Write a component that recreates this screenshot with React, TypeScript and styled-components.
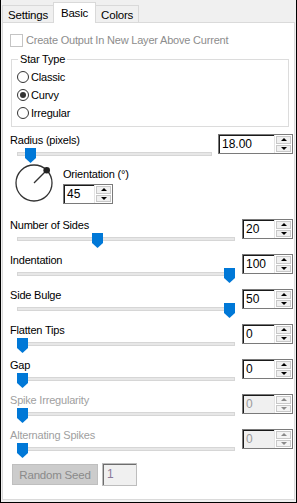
import styled, { createGlobalStyle } from "styled-components";

const GlobalStyle = createGlobalStyle`
  html, body {
    margin: 0;
    padding: 0;
    background: #f0f0f0;
  }
  body {
    font-family: "Liberation Sans", Arial, sans-serif;
    font-size: 11px;
    letter-spacing: -0.2px;
    color: #000;
  }
  * {
    box-sizing: border-box;
  }
`;

const Frame = styled.div`
  width: 297px;
  height: 503px;
  border: 1px solid #000;
  border-top: none;
  background: #f0f0f0;
  display: flex;
  flex-direction: column;
`;

const TabStrip = styled.div`
  height: 22px;
  display: flex;
  align-items: flex-end;
  padding-left: 1px;
`;

const Tab = styled.div<{ $active?: boolean }>`
  height: ${({ $active }) => ($active ? "21px" : "17px")};
  padding: ${({ $active }) => ($active ? "3px 7px 0" : "2px 5px 0")};
  margin: ${({ $active }) => ($active ? "0 -1px -1px" : "0")};
  border: 1px solid #d9d9d9;
  border-bottom: none;
  background: ${({ $active }) => ($active ? "#fff" : "#f0f0f0")};
  position: relative;
  z-index: ${({ $active }) => ($active ? 1 : 0)};
  line-height: 14px;
  font-size: 11.5px;
`;

const Page = styled.div`
  margin: 0 1px;
  height: 478px;
  background: #fff;
  border: 1px solid #dadada;
  padding-left: 7px;
  display: flex;
  flex-direction: column;
`;

const CheckRow = styled.div`
  margin-top: 11px;
  display: flex;
  align-items: center;
  gap: 3px;
  color: #8d8d8d;
  line-height: 13px;
`;

const CheckBox = styled.span`
  width: 13px;
  height: 13px;
  border: 1px solid #c4c4c4;
  background: #fff;
`;

const Group = styled.fieldset`
  margin: 6px 0 0 1px;
  padding: 0;
  width: 278px;
  height: 74px;
  border: 1px solid #dcdcdc;
`;

const Legend = styled.legend`
  margin-left: 6px;
  padding: 0 2px;
  line-height: 13px;
`;

const RadioList = styled.div`
  padding: 2px 0 0 5px;
  display: flex;
  flex-direction: column;
`;

const RadioItem = styled.label`
  height: 18px;
  display: flex;
  align-items: center;
  gap: 2px;
`;

const RadioDot = styled.span<{ $checked?: boolean }>`
  width: 12px;
  height: 12px;
  border-radius: 50%;
  border: 1px solid #333;
  background: #fff;
  display: flex;
  align-items: center;
  justify-content: center;
  &::after {
    content: "";
    width: 6px;
    height: 6px;
    border-radius: 50%;
    background: ${({ $checked }) => ($checked ? "#333" : "transparent")};
  }
`;

const Row = styled.div<{ $h: number; $top?: number }>`
  height: ${({ $h }) => $h}px;
  margin-top: ${({ $top }) => $top ?? 0}px;
  display: flex;
  justify-content: space-between;
  align-items: flex-start;
`;

const Left = styled.div`
  display: flex;
  flex-direction: column;
`;

const Label = styled.div<{ $disabled?: boolean }>`
  height: 13px;
  line-height: 13px;
  color: ${({ $disabled }) => ($disabled ? "#a0a0a0" : "#000")};
`;

const TrackArea = styled.div<{ $w: number }>`
  position: relative;
  width: ${({ $w }) => $w}px;
  height: 17px;
  margin-left: 7px;
  padding-top: 5px;
`;

const Track = styled.div`
  height: 4px;
  background: #e7e7e7;
  border: 1px solid #d6d6d6;
`;

const Thumb = styled.svg`
  position: absolute;
  top: 1px;
`;

const Spin = styled.div<{ $w: number }>`
  width: ${({ $w }) => $w}px;
  height: 20px;
  display: flex;
  border: 1px solid #7a7a7a;
  background: #fff;
  margin-right: 1px;
`;

const Field = styled.div<{ $disabled?: boolean }>`
  flex: 1;
  box-shadow: inset 1px 1px 0 #1a1a1a;
  border-right: 1px solid #e3e3e3;
  background: ${({ $disabled }) => ($disabled ? "#f0f0f0" : "#fff")};
  color: ${({ $disabled }) => ($disabled ? "#9a9a9a" : "#000")};
  padding: 2px 0 0 3px;
  font-size: 12px;
  line-height: 15px;
  letter-spacing: 0;
`;

const Btns = styled.div`
  width: 17px;
  display: flex;
  flex-direction: column;
  padding: 1px;
  gap: 1px;
  background: #fff;
`;

const SpinBtn = styled.div<{ $disabled?: boolean }>`
  flex: 1;
  border: 1px solid #c8c8c8;
  background: ${({ $disabled }) => ($disabled ? "#f4f4f4" : "#f0f0f0")};
  display: flex;
  align-items: center;
  justify-content: center;
`;

const Arrow = styled.span<{ $down?: boolean; $disabled?: boolean }>`
  width: 0;
  height: 0;
  border-left: 3px solid transparent;
  border-right: 3px solid transparent;
  ${({ $down, $disabled }) =>
    $down
      ? `border-top: 3px solid ${$disabled ? "#8a8a8a" : "#000"};`
      : `border-bottom: 3px solid ${$disabled ? "#8a8a8a" : "#000"};`}
`;

const DialArea = styled.div`
  height: 56px;
  display: flex;
  align-items: flex-start;
`;

const Dial = styled.svg`
  margin-left: 4px;
`;

const Orientation = styled.div`
  margin-left: 9px;
  padding-top: 5px;
  display: flex;
  flex-direction: column;
  gap: 3px;
`;

const SeedRow = styled.div`
  margin-top: -1px;
  display: flex;
  align-items: center;
  gap: 4px;
  padding-left: 2px;
`;

const SeedButton = styled.div`
  width: 86px;
  height: 21px;
  background: #cccccc;
  border: 1px solid #bfbfbf;
  color: #8a8a8a;
  display: flex;
  align-items: center;
  justify-content: center;
  font-size: 11.5px;
`;

const SeedInput = styled.div`
  width: 35px;
  height: 23px;
  border: 1px solid #bdbdbd;
  box-shadow: inset 1px 1px 0 #6d6d6d;
  background: #f0f0f0;
  color: #8a7a9a;
  padding: 3px 0 0 4px;
  font-size: 12px;
`;

interface ISpinner {
  value: string;
  width: number;
  disabled?: boolean;
}

const Spinner = ({ value, width, disabled }: ISpinner) => (
  <Spin $w={width}>
    <Field $disabled={disabled}>{value}</Field>
    <Btns>
      <SpinBtn $disabled={disabled}>
        <Arrow $disabled={disabled} />
      </SpinBtn>
      <SpinBtn $disabled={disabled}>
        <Arrow $down $disabled={disabled} />
      </SpinBtn>
    </Btns>
  </Spin>
);

interface ISlider {
  label: string;
  value: string;
  pos: number;
  track: number;
  spin: number;
  height: number;
  top?: number;
  disabled?: boolean;
}

const SliderRow = ({ label, value, pos, track, spin, height, top, disabled }: ISlider) => (
  <Row $h={height} $top={top}>
    <Left>
      <Label $disabled={disabled}>{label}</Label>
      <TrackArea $w={track}>
        <Track />
        <Thumb
          width="11"
          height="15"
          viewBox="0 0 11 15"
          style={{ left: Math.round(pos * (track - 11)) }}
        >
          <polygon points="0,0 11,0 11,10 5.5,15 0,10" fill="#0078d7" />
        </Thumb>
      </TrackArea>
    </Left>
    <Spinner value={value} width={spin} disabled={disabled} />
  </Row>
);

const rows = [
  { label: "Number of Sides", value: "20", pos: 0.362 },
  { label: "Indentation", value: "100", pos: 1 },
  { label: "Side Bulge", value: "50", pos: 1 },
  { label: "Flatten Tips", value: "0", pos: 0 },
  { label: "Gap", value: "0", pos: 0 },
  { label: "Spike Irregularity", value: "0", pos: 0, disabled: true },
  { label: "Alternating Spikes", value: "0", pos: 0, disabled: true },
];

const App = () => {
  return (
    <>
      <GlobalStyle />
      <Frame>
        <TabStrip>
          <Tab>Settings</Tab>
          <Tab $active>Basic</Tab>
          <Tab>Colors</Tab>
        </TabStrip>
        <Page>
          <CheckRow>
            <CheckBox />
            <span>Create Output In New Layer Above Current</span>
          </CheckRow>
          <Group>
            <Legend>Star Type</Legend>
            <RadioList>
              <RadioItem>
                <RadioDot />
                Classic
              </RadioItem>
              <RadioItem>
                <RadioDot $checked />
                Curvy
              </RadioItem>
              <RadioItem>
                <RadioDot />
                Irregular
              </RadioItem>
            </RadioList>
          </Group>
          <SliderRow
            label="Radius (pixels)"
            value="18.00"
            pos={0.043}
            track={195}
            spin={75}
            height={29}
            top={7}
          />
          <DialArea>
            <Dial width="40" height="40" viewBox="0 0 40 40">
              <circle cx="20" cy="20" r="18" fill="none" stroke="#333" strokeWidth="1.3" />
              <line x1="20" y1="20" x2="32.7" y2="7.3" stroke="#333" strokeWidth="1.3" />
              <circle cx="32.7" cy="7.3" r="3.3" fill="#222" />
            </Dial>
            <Orientation>
              <Label>Orientation (°)</Label>
              <Spinner value="45" width={50} />
            </Orientation>
          </DialArea>
          {rows.map((r) => (
            <SliderRow
              key={r.label}
              label={r.label}
              value={r.value}
              pos={r.pos}
              track={218}
              spin={51}
              height={35}
              disabled={r.disabled}
            />
          ))}
          <SeedRow>
            <SeedButton>Random Seed</SeedButton>
            <SeedInput>1</SeedInput>
          </SeedRow>
        </Page>
      </Frame>
    </>
  );
};

export default App;
